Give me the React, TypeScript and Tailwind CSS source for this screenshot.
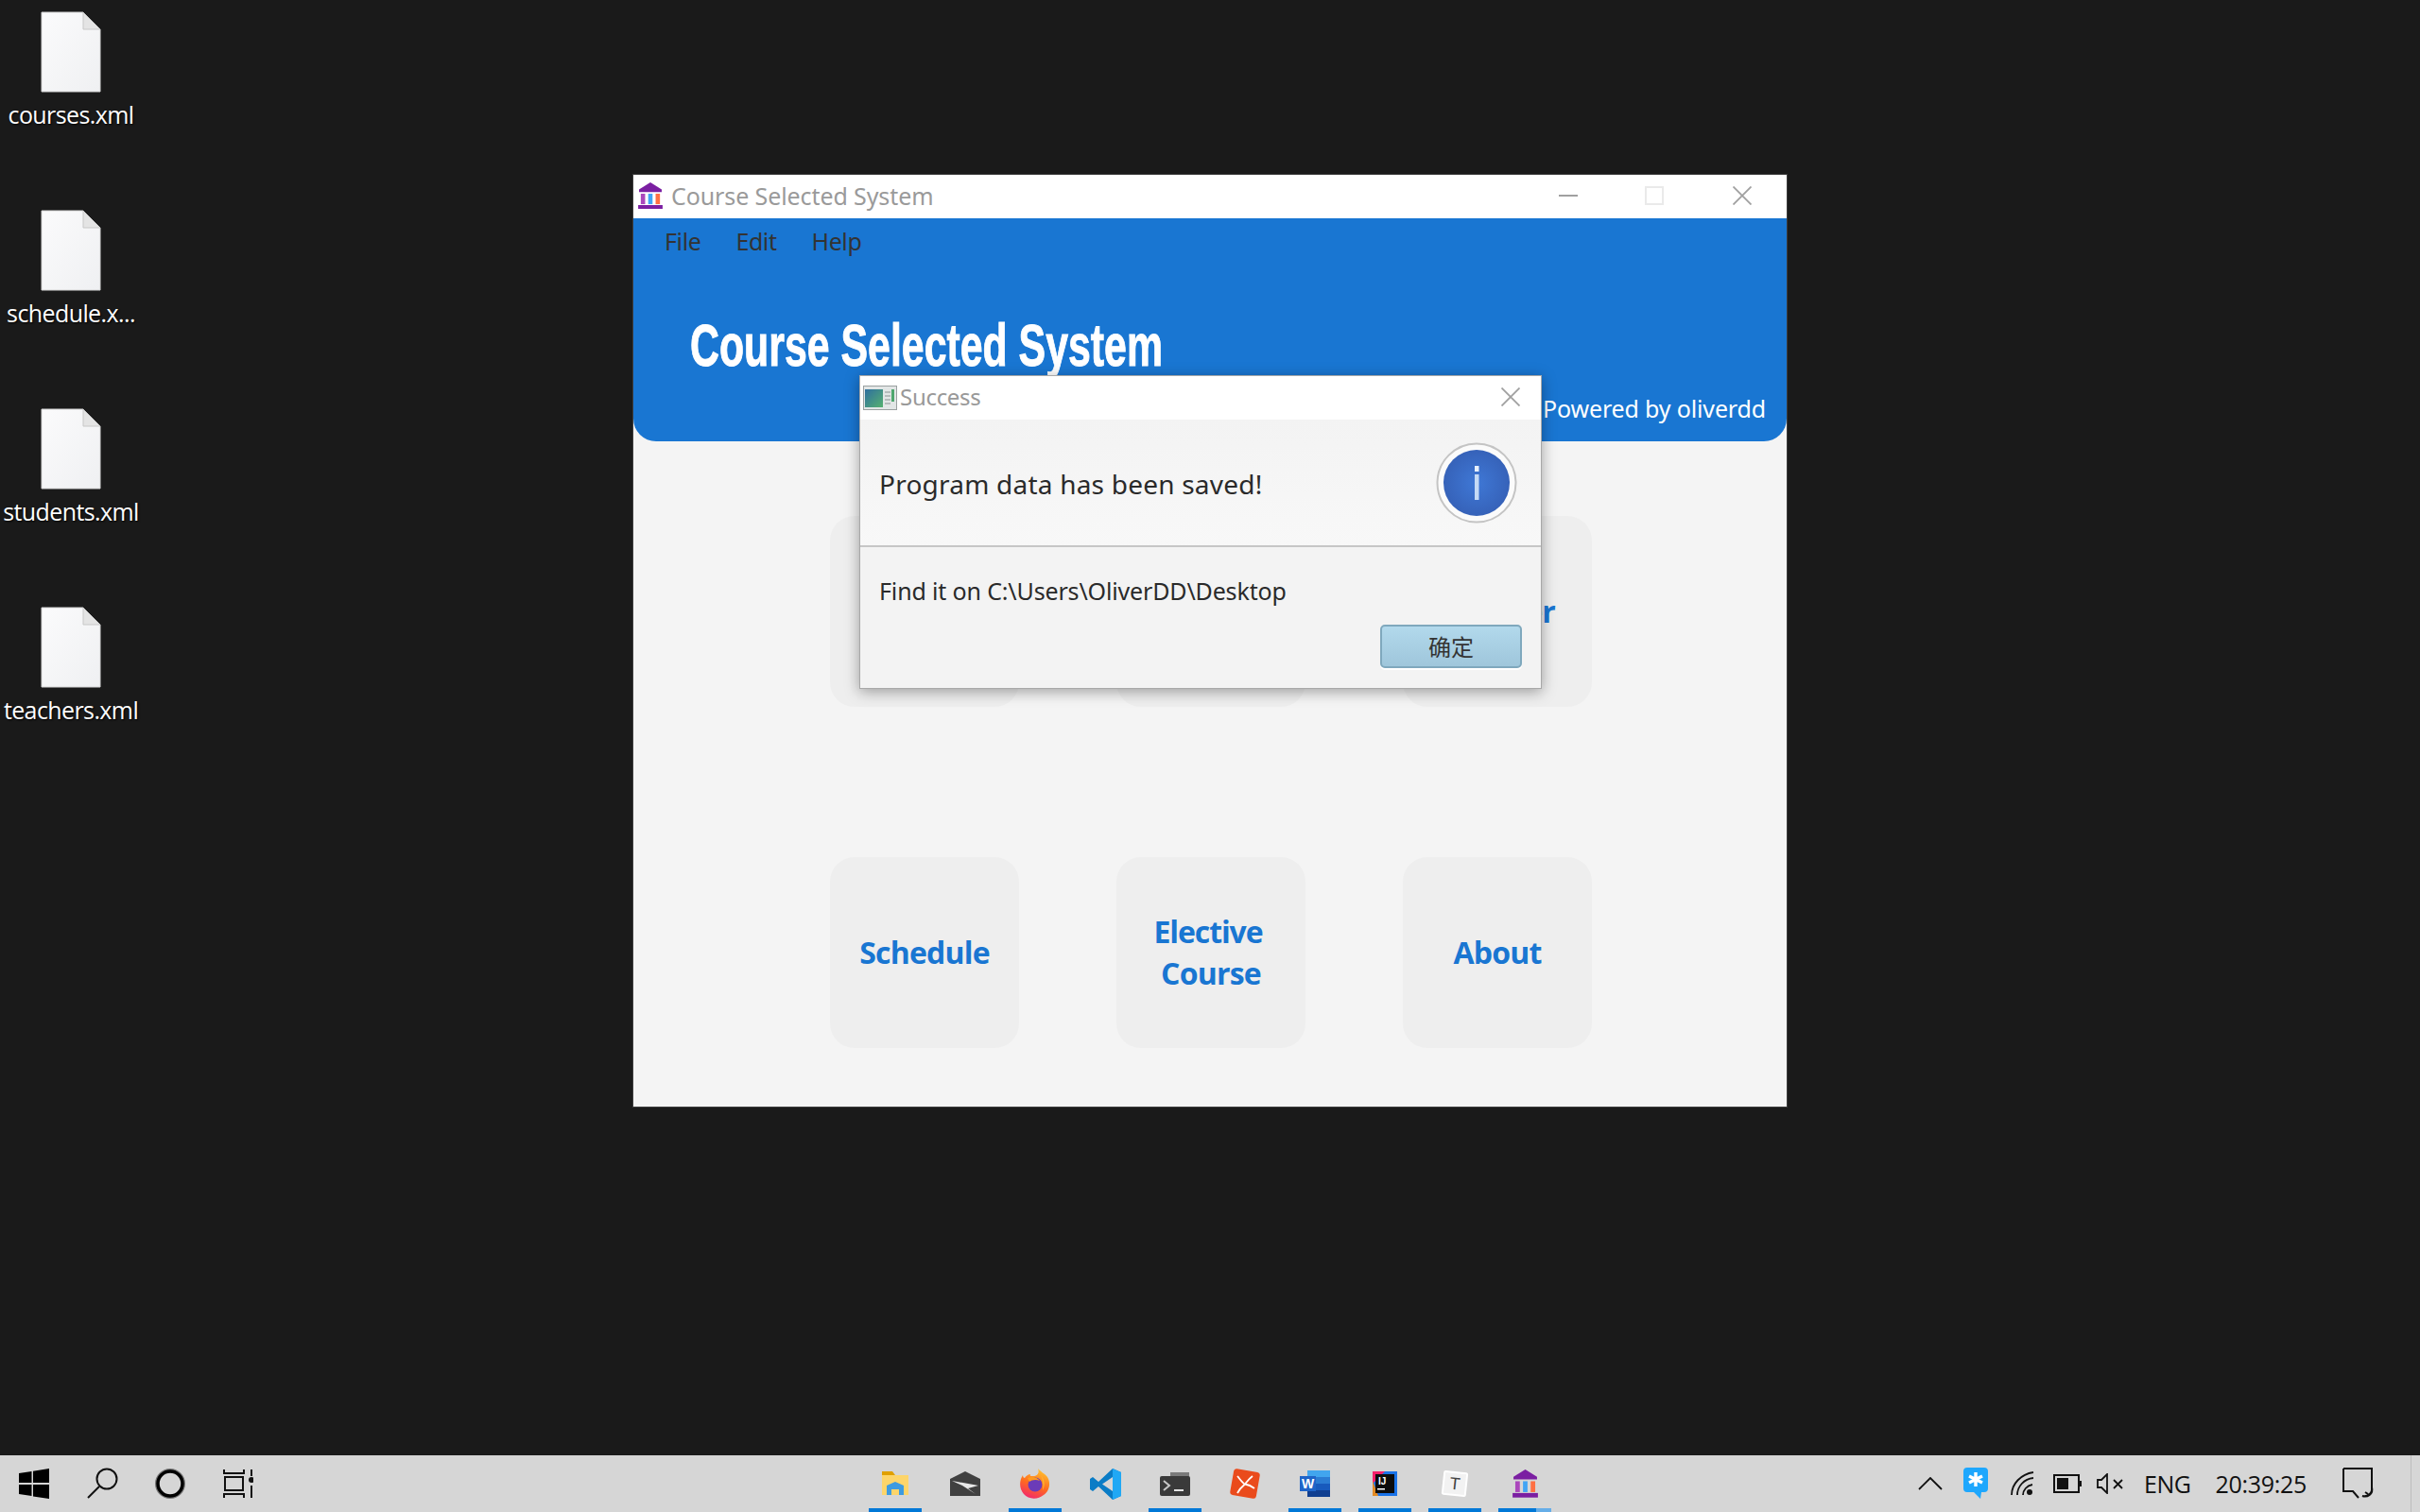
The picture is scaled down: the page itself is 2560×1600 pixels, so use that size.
import React from "react";

const ui = "font-['Noto_Sans','Open_Sans',sans-serif]";

function FileIcon() {
  return (
    <svg width="64" height="86" viewBox="0 0 64 86" className="block">
      <defs>
        <linearGradient id="fg" x1="0" y1="0" x2="1" y2="1">
          <stop offset="0" stopColor="#fbfbfc" />
          <stop offset="1" stopColor="#eff0f2" />
        </linearGradient>
      </defs>
      <path d="M1 1H45L63 19V85H1Z" fill="url(#fg)" stroke="#d4d4d4" strokeWidth="1" />
      <path d="M45 1V19H63Z" fill="#e4e4e4" stroke="#c8c8c8" strokeWidth="1" />
    </svg>
  );
}

function DesktopFile({ name }: { name: string }) {
  return (
    <div className="flex h-[210px] w-[150px] flex-col items-center pt-[12px]">
      <FileIcon />
      <span className="mt-[5px] whitespace-nowrap font-['Open_Sans',sans-serif] text-[25px] leading-[36px] tracking-[-0.6px] text-white [text-shadow:1px_1px_2px_#000]">
        {name}
      </span>
    </div>
  );
}

function Museum({ size = 28 }: { size?: number }) {
  return (
    <svg width={size} height={size * 1.1} viewBox="0 0 28 31" className="block">
      <path d="M14 0L27 8V11H1V8Z" fill="#7b1fa2" />
      <rect x="3" y="13" width="5" height="12" fill="#ab47bc" />
      <rect x="11.5" y="13" width="5" height="12" fill="#42a5f5" />
      <rect x="20" y="13" width="5" height="12" fill="#ff7043" />
      <rect x="0" y="26" width="28" height="5" fill="#7b1fa2" />
    </svg>
  );
}

function XIcon({ color = "#a0a0a0" }: { color?: string }) {
  return (
    <svg width="20" height="20" viewBox="0 0 20 20" className="block">
      <path d="M0.5 0.5L19.5 19.5M19.5 0.5L0.5 19.5" stroke={color} strokeWidth="1.8" fill="none" />
    </svg>
  );
}

function DialogIcon() {
  return (
    <svg width="36" height="26" viewBox="0 0 36 26" className="block">
      <defs>
        <linearGradient id="dg" x1="0" y1="0" x2="1" y2="1">
          <stop offset="0" stopColor="#2f6f9f" />
          <stop offset="1" stopColor="#55b070" />
        </linearGradient>
      </defs>
      <rect x="0.5" y="0.5" width="35" height="25" fill="#e2e6e6" stroke="#9aa0a0" />
      <rect x="2" y="4" width="19" height="19" fill="url(#dg)" />
      <path d="M23 7h6M23 11h6M23 15h6M23 19h6" stroke="#a8aeae" strokeWidth="1.5" />
      <rect x="30" y="4" width="3" height="13" fill="#4fa76f" />
    </svg>
  );
}

function InfoIcon() {
  return (
    <svg width="86" height="86" viewBox="0 0 86 86" className="block">
      <defs>
        <radialGradient id="ig" cx="0.5" cy="0.5" r="0.55">
          <stop offset="0" stopColor="#3f78d6" />
          <stop offset="1" stopColor="#3560b6" />
        </radialGradient>
      </defs>
      <circle cx="43" cy="43" r="41.5" fill="#fbfbfb" stroke="#c4c4c4" strokeWidth="2" />
      <circle cx="43" cy="43" r="35" fill="url(#ig)" />
      <rect x="41" y="25" width="4.5" height="6" fill="#e8f0fb" />
      <rect x="41" y="34" width="4.5" height="27" fill="#c5daf5" />
    </svg>
  );
}

function Card({ children }: { children?: React.ReactNode }) {
  return (
    <div className="flex h-[202px] w-[200px] items-center justify-center rounded-[26px] bg-[#eeeeee] text-center font-['Open_Sans',sans-serif] text-[32px] font-bold leading-[44px] tracking-[-0.8px] text-[#1976d2]">
      <div>{children}</div>
    </div>
  );
}

function Dialog() {
  return (
    <div className={`absolute left-[239px] top-[212px] flex h-[332px] w-[722px] flex-col border border-[#a8a8a8] bg-[#f3f3f3] shadow-[0_3px_14px_rgba(0,0,0,0.35)] ${ui}`}>
      <div className="flex h-[46px] shrink-0 items-center bg-white pl-[3px] pr-[22px]">
        <DialogIcon />
        <span className="mb-[3px] ml-[3px] text-[24px] leading-none tracking-[-0.3px] text-[#999999]">Success</span>
        <span className="mb-[3px] ml-auto"><XIcon /></span>
      </div>
      <div className="flex h-[135px] shrink-0 items-center border-b-[2px] border-[#c6c6c6] bg-gradient-to-b from-[#f3f3f3] to-[#f8f8f8] pl-[20px] pr-[25px]">
        <span className="mt-[2px] text-[28px] leading-none tracking-[0.22px] text-[#2a2a2a]">Program data has been saved!</span>
        <span className="ml-auto"><InfoIcon /></span>
      </div>
      <div className="flex flex-1 flex-col">
        <span className="ml-[20px] mt-[29px] text-[25px] leading-[34px] tracking-[-0.15px] text-[#2a2a2a]">
          Find it on C:\Users\OliverDD\Desktop
        </span>
        <button className="mr-[20px] mt-[19px] flex h-[46px] w-[150px] items-center justify-center self-end rounded-[5px] border-[2px] border-[#7fa8bd] bg-gradient-to-b from-[#b2d9ec] to-[#9fc6db] font-['Noto_Sans_CJK_SC',sans-serif] text-[24px] leading-none text-[#333333] shadow-[0_2px_0_#ffffff]">
          确定
        </button>
      </div>
    </div>
  );
}

function AppWindow() {
  return (
    <div className={`absolute left-[669px] top-[184px] flex h-[988px] w-[1222px] flex-col border border-[#3c3c3c] bg-[#f4f4f4] ${ui}`}>
      <div className="flex h-[46px] shrink-0 items-center bg-white pl-[5px]">
        <span className="-mt-[2px]"><Museum size={26} /></span>
        <span className="mb-[2px] ml-[9px] text-[25px] leading-none tracking-[-0.1px] text-[#9a9a9a]">Course Selected System</span>
        <span className="mb-[2px] ml-auto flex items-center">
          <svg width="20" height="4" viewBox="0 0 20 4" className="block"><rect y="1" width="20" height="2" fill="#a0a0a0" /></svg>
          <svg width="20" height="20" viewBox="0 0 20 20" className="ml-[71px] block"><rect x="1" y="1" width="18" height="18" fill="none" stroke="#eaeaea" strokeWidth="2" /></svg>
          <span className="ml-[73px] mr-[37px]"><XIcon /></span>
        </span>
      </div>
      <div className="flex h-[236px] shrink-0 flex-col rounded-b-[24px] bg-[#1976d2]">
        <div className="flex h-[48px] items-center gap-[37px] pl-[33px] text-[25px] leading-none tracking-[-0.4px] text-[#333333]">
          <span>File</span>
          <span>Edit</span>
          <span>Help</span>
        </div>
        <div className="mt-[50px] h-[72px] pl-[60px]">
          <span className="inline-block origin-left scale-x-[0.68] whitespace-nowrap font-['Liberation_Sans_Narrow','Liberation_Sans',sans-serif] text-[63px] font-bold leading-[72px] text-white [-webkit-text-stroke:1px_white]">
            Course Selected System
          </span>
        </div>
        <div className="mt-[13px] h-[36px] pr-[22px] text-right text-[25px] leading-[36px] tracking-[-0.15px] text-white">
          Powered by oliverdd
        </div>
      </div>
      <div className="flex flex-1 flex-col gap-[159px] pl-[208px] pt-[79px]">
        <div className="flex gap-[103px]">
          <Card />
          <Card />
          <Card>Teacher</Card>
        </div>
        <div className="flex gap-[103px]">
          <Card>Schedule</Card>
          <Card>
            <span className="mr-[6px] tracking-[-1.1px]">Elective</span>
            <br />
            Course
          </Card>
          <Card>About</Card>
        </div>
      </div>
      <Dialog />
    </div>
  );
}

function TaskItem({ children, active, wide }: { children: React.ReactNode; active?: boolean; wide?: boolean }) {
  return (
    <div className="relative flex h-[60px] w-[74px] items-center justify-center">
      {children}
      {active && (
        <div className="absolute bottom-0 left-[9px] flex h-[4px] w-[56px]">
          <div className={`h-full ${wide ? "w-[40px]" : "w-full"} bg-[#0078d7]`} />
          {wide && <div className="h-full w-[16px] bg-[#66aee8]" />}
        </div>
      )}
    </div>
  );
}

function Taskbar() {
  return (
    <div className="flex h-[60px] shrink-0 items-center bg-[#d6d6d6]">
      <div className="flex w-[288px] shrink-0">
        <div className="flex h-[60px] w-[72px] items-center justify-center">
          <svg width="32" height="32" viewBox="0 0 32 32" className="block">
            <path d="M0 5L13.5 3V15H0ZM15 2.7L32 0V15H15ZM0 17H13.5V29L0 27ZM15 17H32V32L15 29.5Z" fill="#000" />
          </svg>
        </div>
        <div className="flex h-[60px] w-[72px] items-center justify-center">
          <svg width="34" height="34" viewBox="0 0 34 34" className="block">
            <circle cx="22" cy="12" r="10.5" fill="none" stroke="#111" strokeWidth="2" />
            <path d="M14 20L2 32" stroke="#111" strokeWidth="2" />
          </svg>
        </div>
        <div className="flex h-[60px] w-[72px] items-center justify-center">
          <svg width="32" height="32" viewBox="0 0 32 32" className="block">
            <circle cx="16" cy="16" r="14" fill="none" stroke="#777" strokeWidth="4" />
            <circle cx="16" cy="16" r="13" fill="none" stroke="#000" strokeWidth="3.5" />
          </svg>
        </div>
        <div className="flex h-[60px] w-[72px] items-center justify-center">
          <svg width="32" height="32" viewBox="0 0 32 32" className="block" fill="none" stroke="#111" strokeWidth="2">
            <path d="M1 1V5H22V1M2 9H21V23H2ZM1 31V27H22V31M30 1V8M30 18V31" />
            <circle cx="30" cy="12" r="3" fill="#111" stroke="none" />
          </svg>
        </div>
      </div>
      <div className="ml-[622px] flex">
        <TaskItem active>
          <svg width="30" height="26" viewBox="0 0 30 26" className="block">
            <path d="M1 0H12L15 4H29V24H1Z" fill="#e0a000" />
            <rect x="1" y="4" width="28" height="21" fill="#fdd56a" />
            <path d="M6 25V15L15 11L24 15V25H19V19H11V25Z" fill="#3d9be0" />
          </svg>
        </TaskItem>
        <TaskItem>
          <svg width="34" height="26" viewBox="0 0 34 26" className="block">
            <path d="M1 8L17 0L33 8V26H1Z" fill="#404040" />
            <path d="M3 10L31 15L20 18L28 24L14 15Z" fill="#e8e8e8" />
          </svg>
        </TaskItem>
        <TaskItem active>
          <svg width="32" height="32" viewBox="0 0 32 32" className="block">
            <defs>
              <linearGradient id="ff" x1="0.7" y1="0" x2="0.3" y2="1">
                <stop offset="0" stopColor="#ffc52e" />
                <stop offset="0.55" stopColor="#ff6a1f" />
                <stop offset="1" stopColor="#f2286e" />
              </linearGradient>
            </defs>
            <path d="M19 0C21 3 26 5 29 9C33 15 31 24 25 28C19 33 9 33 4 27C-1 21 -1 13 3 7C3 9 4 10 5 10C6 8 9 6 11 6C10 8 12 8 14 8C18 8 21 5 19 0Z" fill="url(#ff)" />
            <circle cx="16" cy="17" r="7.5" fill="#6b3bb8" />
            <path d="M8 10C13 8 18 9 21 13C17 11 12 12 10 14Z" fill="#ff9a1f" />
            <path d="M22 7C26 11 27 18 24 23C25 17 24 11 22 7Z" fill="#ffb52e" />
          </svg>
        </TaskItem>
        <TaskItem>
          <svg width="33" height="33" viewBox="0 0 33 33" className="block">
            <path d="M24 0L33 4V29L24 33L9 19L3 24L0 22V11L3 9L9 14ZM24 9L13 16.5L24 24Z" fill="#0a7cc6" fillRule="evenodd" />
            <path d="M24 0L33 4V29L24 33Z" fill="#20a8f5" />
          </svg>
        </TaskItem>
        <TaskItem active>
          <svg width="32" height="25" viewBox="0 0 32 25" className="block">
            <rect x="11" y="0" width="20" height="6" fill="#7a7a7a" />
            <rect x="0" y="4" width="32" height="21" rx="2" fill="#3a3a3a" />
            <path d="M4 9L10 14L4 19" stroke="#c8c8c8" strokeWidth="2" fill="none" />
            <rect x="15" y="18" width="10" height="2" fill="#e4e4e4" />
          </svg>
        </TaskItem>
        <TaskItem>
          <svg width="32" height="32" viewBox="0 0 32 32" className="block">
            <rect x="2" y="2" width="28" height="28" rx="3" transform="rotate(10 16 16)" fill="#ea4b1c" />
            <path d="M8 8C12 13 14 16 16 16.5C19 17 22 18 26 21M24 8C20 11 18 14 16 16.5C13 19 10 22 8 26" stroke="#fff" strokeWidth="1.8" fill="none" />
          </svg>
        </TaskItem>
        <TaskItem active>
          <svg width="32" height="28" viewBox="0 0 32 28" className="block">
            <rect x="8" y="0" width="24" height="7" fill="#41a5ee" />
            <rect x="8" y="7" width="24" height="7" fill="#2b7cd3" />
            <rect x="8" y="14" width="24" height="7" fill="#185abd" />
            <rect x="8" y="21" width="24" height="7" fill="#103f91" />
            <rect x="0" y="6" width="17" height="16" fill="#1e64c8" />
            <text x="8.5" y="19" textAnchor="middle" fontFamily="Liberation Sans" fontWeight="700" fontSize="14" fill="#fff">W</text>
          </svg>
        </TaskItem>
        <TaskItem active>
          <svg width="26" height="26" viewBox="0 0 26 26" className="block">
            <rect width="26" height="26" fill="#1a73e8" />
            <path d="M0 0H13L0 13Z" fill="#f5206b" />
            <path d="M0 10L6 26H0Z" fill="#e38b24" />
            <rect x="3" y="3" width="20" height="20" fill="#0c0c0c" />
            <text x="6" y="13.5" fontFamily="Liberation Sans" fontWeight="700" fontSize="10" fill="#fff">IJ</text>
            <rect x="5" y="18" width="8" height="1.5" fill="#fff" />
          </svg>
        </TaskItem>
        <TaskItem active>
          <div className="flex h-[26px] w-[26px] rotate-[6deg] items-center justify-center rounded-[2px] border-[2px] border-white bg-[#f2f2f2] font-['Liberation_Sans',sans-serif] text-[18px] leading-none text-[#444444]">
            T
          </div>
        </TaskItem>
        <TaskItem active wide>
          <Museum size={27} />
        </TaskItem>
      </div>
      <div className="ml-[379px] flex items-center">
        <svg width="26" height="14" viewBox="0 0 26 14" className="block">
          <path d="M1 13L13 1L25 13" fill="none" stroke="#111" strokeWidth="1.8" />
        </svg>
        <svg width="26" height="34" viewBox="0 0 26 34" className="ml-[22px] block">
          <path d="M4 0H22A4 4 0 0 1 26 4V22A4 4 0 0 1 22 26H19L18 33L11 26H4A4 4 0 0 1 0 22V4A4 4 0 0 1 4 0Z" fill="#1ea7fd" />
          <path d="M13 5V20M6 9L20 16M20 9L6 16" stroke="#fff" strokeWidth="3.4" />
        </svg>
        <svg width="26" height="26" viewBox="0 0 26 26" className="ml-[23px] block" fill="none" stroke="#111" strokeWidth="1.8">
          <path d="M2 25C2 13 12 3 25 1M8 25C8 16 15 8 25 7M14 25C14 20 18 15 24 14" />
          <circle cx="21" cy="22" r="3" fill="#111" stroke="none" />
        </svg>
        <svg width="30" height="20" viewBox="0 0 30 20" className="ml-[20px] block">
          <rect x="1" y="1" width="26" height="18" fill="none" stroke="#111" strokeWidth="2" />
          <rect x="4" y="4" width="12" height="12" fill="#111" />
          <rect x="28" y="7" width="2" height="6" fill="#111" />
        </svg>
        <svg width="28" height="22" viewBox="0 0 28 22" className="ml-[16px] block" fill="none" stroke="#111" strokeWidth="1.8">
          <path d="M1 7H5L11 1V21L5 15H1Z" />
          <path d="M18 7L27 16M27 7L18 16" />
        </svg>
        <span className="ml-[22px] font-['Open_Sans',sans-serif] text-[25px] leading-none tracking-[-0.5px] text-[#111111]">ENG</span>
        <span className="ml-[26px] font-['Open_Sans',sans-serif] text-[25px] leading-none tracking-[-0.3px] text-[#111111]">20:39:25</span>
        <svg width="34" height="34" viewBox="0 0 34 34" className="ml-[38px] block" fill="none" stroke="#111" strokeWidth="2">
          <path d="M1 1H31V24M1 1V25H11L17 32" />
          <path d="M31 21A8 8 0 0 1 21 30C26 32 33 28 31 21ZM24 26L27 28" />
        </svg>
        <div className="ml-[38px] h-[60px] w-[1px] bg-[#bdbdbd]" />
      </div>
    </div>
  );
}

export default function App() {
  return (
    <div className="flex h-[1600px] w-[2560px] flex-col overflow-hidden bg-[#1a1a1a]">
      <div className="relative flex-1">
        <div className="flex flex-col">
          <DesktopFile name="courses.xml" />
          <DesktopFile name="schedule.x..." />
          <DesktopFile name="students.xml" />
          <DesktopFile name="teachers.xml" />
        </div>
        <AppWindow />
      </div>
      <Taskbar />
    </div>
  );
}
